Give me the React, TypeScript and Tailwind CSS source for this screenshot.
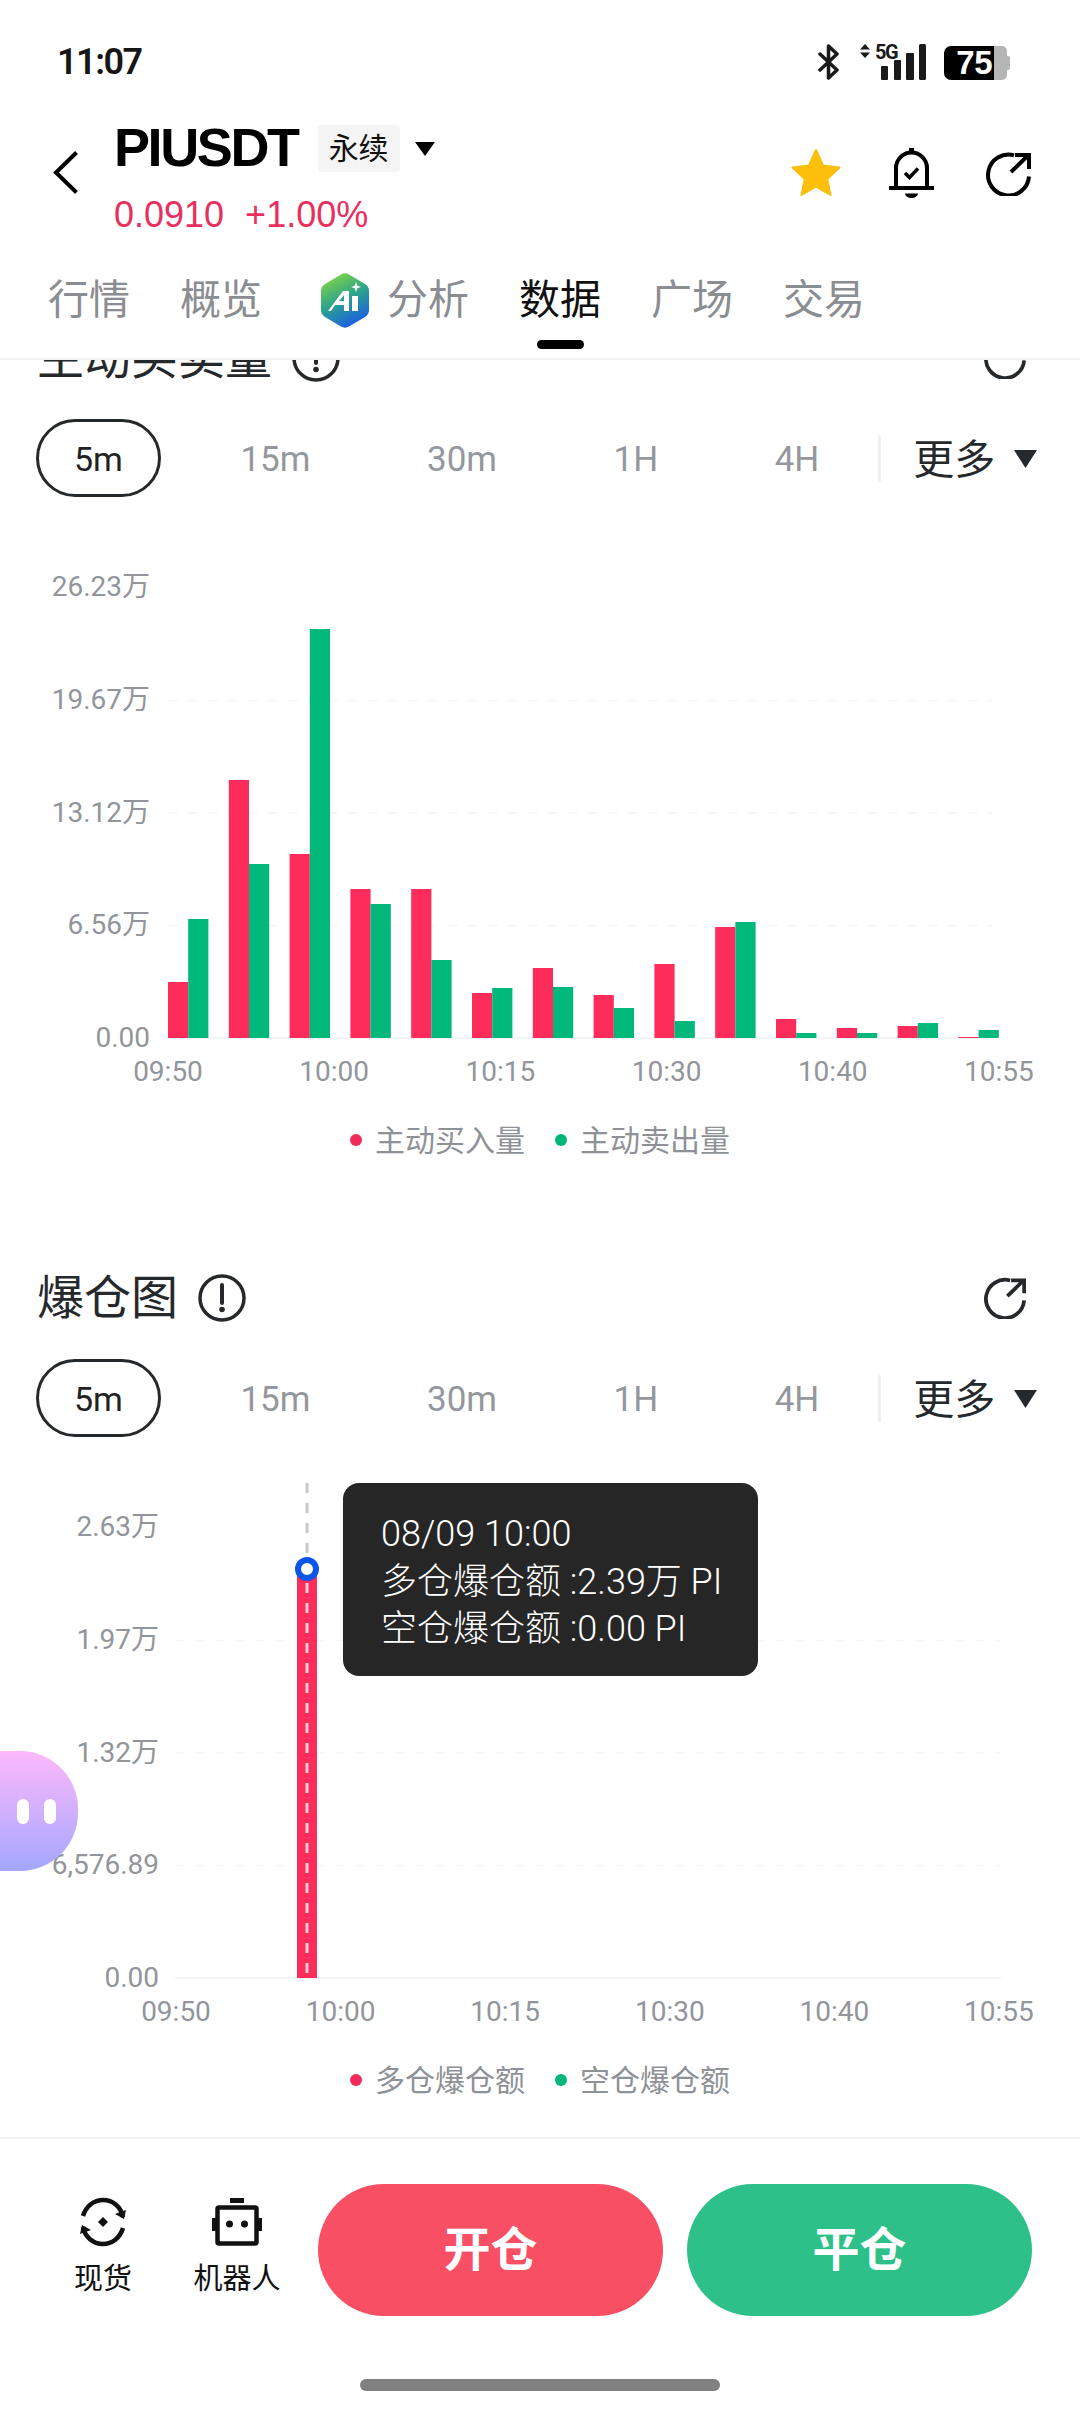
import React from 'react';

const buySell = [
  [56, 119], [258, 174], [184, 409], [149, 134], [149, 78], [45, 50], [70, 51],
  [43, 30], [74, 17], [111, 116], [19, 5], [10, 5], [12, 15], [1, 8],
];

const periods = ['5m', '15m', '30m', '1H', '4H'];

function ShareIcon({ className }: { className: string }) {
  return (
    <svg viewBox="0 0 45 44" fill="none" stroke="currentColor" strokeWidth="4" className={className}>
      <path d="M28 3.2A20.5 20.5 0 1 0 43 24.5" />
      <path d="M25 20 42 3.5M29 3h14v14" />
    </svg>
  );
}

function InfoIcon() {
  return (
    <svg viewBox="0 0 48 48" fill="none" stroke="#26292c" strokeWidth="3.5" className="w-[48px] h-[48px]">
      <circle cx="24" cy="24" r="22" />
      <path d="M24 11v18" strokeWidth="4" strokeLinecap="round" />
      <circle cx="24" cy="35.5" r="2.8" fill="#26292c" stroke="none" />
    </svg>
  );
}

function AiLogo() {
  return (
    <svg viewBox="0 0 50 55" className="w-[50px] h-[55px]">
      <defs>
        <linearGradient id="aiGrad" x1="0.2" y1="0" x2="0.65" y2="1">
          <stop offset="0" stopColor="#86d93f" />
          <stop offset="0.5" stopColor="#2ba38c" />
          <stop offset="1" stopColor="#1a5be8" />
        </linearGradient>
      </defs>
      <path
        d="M21 1.5a8 8 0 0 1 8 0l16 9.5a8 8 0 0 1 4 7v19a8 8 0 0 1-4 7l-16 9.5a8 8 0 0 1-8 0L5 44a8 8 0 0 1-4-7V18a8 8 0 0 1 4-7z"
        fill="url(#aiGrad)"
      />
      <path d="M23 18h6v20h-5v-6h-9l-4 6H8zM24 28v-6l-5 6z" fill="#fff" fillRule="evenodd" />
      <path d="M32 23h6v15h-6z" fill="#fff" />
      <path d="M36 9l1.300 3.700L41 14l-3.700 1.300L36 19l-1.300-3.700L31 14l3.700-1.300z" fill="#fff" />
    </svg>
  );
}

function StatusBar() {
  return (
    <div className="h-[100px] flex items-start justify-between pl-[57px] pr-[70px] pt-[44px]">
      <span className="text-[36px] leading-[36px] font-semibold tracking-[-1.5px] text-[#161616]">11:07</span>
      <div className="flex items-start">
        <svg viewBox="0 0 21 36" fill="none" stroke="#1a1a1a" strokeWidth="3.5" strokeLinejoin="round" strokeLinecap="round" className="w-[21px] h-[36px]">
          <path d="M2 10l17 16-8.5 8V2L19 10 2 26" />
        </svg>
        <svg viewBox="0 0 10 14" className="w-[10px] h-[14px] ml-[21px]" fill="#1a1a1a">
          <path d="M5 0l5 5.5H0zM5 14L0 8.5h10z" />
        </svg>
        <div className="relative w-[52px] h-[36px] ml-[5px]">
          <span className="absolute left-0 top-[-2px] text-[20px] leading-[20px] font-bold tracking-[-1.5px] text-[#1a1a1a]">5G</span>
          <svg viewBox="0 0 45 36" className="absolute left-[6px] top-0 w-[45px] h-[36px]" fill="#1a1a1a">
            <rect x="0" y="22" width="7" height="14" rx="1" />
            <rect x="13" y="16" width="7" height="20" rx="1" />
            <rect x="25" y="9" width="8" height="27" rx="1" />
            <rect x="38" y="0" width="7" height="36" rx="1.5" />
          </svg>
        </div>
        <div className="flex items-center ml-[17px] mt-[2px]">
          <div className="w-[50px] h-[34px] bg-black rounded-l-[7px] flex items-center justify-end pr-[2px]">
            <span className="text-[33px] leading-[34px] font-bold tracking-[-0.5px] text-white font-[family-name:'Liberation_Sans',sans-serif]">75</span>
          </div>
          <div className="w-[13px] h-[34px] bg-[#b5b5b5] rounded-r-[5px]" />
          <div className="w-[3px] h-[14px] bg-[#b5b5b5] rounded-r-[2px]" />
        </div>
      </div>
    </div>
  );
}

function Header() {
  return (
    <div className="h-[146px] flex pl-[53px] pr-[49px]">
      <svg viewBox="0 0 25 43" fill="none" stroke="#000" strokeWidth="4" className="w-[25px] h-[43px] mt-[51px]">
        <path d="M23.5 1.5 3 21.5l20.5 20" />
      </svg>
      <div className="ml-[36px] flex flex-col pt-[9px]">
        <div className="flex items-center h-[73px] pt-[2px]">
          <span className="text-[54px] leading-[60px] font-bold tracking-[-2.4px] text-black font-[family-name:'Liberation_Sans',sans-serif]">PIUSDT</span>
          <span className="ml-[20px] w-[82px] h-[47px] bg-[#f5f5f5] rounded-[4px] flex items-center justify-center text-[30px] text-[#111] mt-[4px]">永续</span>
          <svg viewBox="0 0 20 14" fill="#000" className="w-[20px] h-[14px] ml-[15px] mt-[4px]">
            <path d="M0 0h20L10 14z" />
          </svg>
        </div>
        <div className="flex items-center h-[46px] mt-[10px] gap-[21px] text-[36px] leading-[46px] text-[#e8305f] font-[family-name:'Liberation_Sans',sans-serif]">
          <span>0.0910</span>
          <span>+1.00%</span>
        </div>
      </div>
      <div className="ml-auto flex items-start pt-[47px]">
        <svg viewBox="0 0 50 49" className="w-[50px] h-[49px] mt-[1px]" fill="#fcbf0b" stroke="#fcbf0b" strokeWidth="2" strokeLinejoin="round">
          <path d="M25 2l7 15.5 16.5 2-12.2 11.4L39.500 47 25 38.600 10.500 47l3.200-16.100L1.500 19.500l16.500-2z" />
        </svg>
        <svg viewBox="0 0 45 51" fill="none" stroke="#000" strokeWidth="4" className="w-[45px] h-[51px] ml-[48px]">
          <path d="M7 41V21a15.500 15.500 0 0 1 31 0v20" />
          <path d="M0 41h45" />
          <path d="M22.500 1v4" strokeWidth="5" />
          <path d="M16 46.500h13a6.500 4.500 0 0 1-13 0z" fill="#000" stroke="none" />
          <path d="M16 26l4.500 4.500L29 21.500" strokeWidth="3.500" />
        </svg>
        <ShareIcon className="w-[45px] h-[44px] ml-[52px] mt-[5px] text-black" />
      </div>
    </div>
  );
}

function Tabs() {
  const tabClass = 'text-[41px] leading-[56px] text-[#8a8d91]';
  return (
    <div className="h-[114px] flex items-start pl-[48px] gap-[50px] border-b-2 border-[#f2f2f2] pt-[26px]">
      <span className={tabClass}>行情</span>
      <span className={tabClass}>概览</span>
      <div className="flex items-center gap-[17px] ml-[8px]">
        <AiLogo />
        <span className={tabClass}>分析</span>
      </div>
      <div className="flex flex-col items-center">
        <span className="text-[41px] leading-[56px] text-[#111]">数据</span>
        <div className="w-[47px] h-[9px] rounded-full bg-black mt-[12px]" />
      </div>
      <span className={tabClass}>广场</span>
      <span className={tabClass}>交易</span>
    </div>
  );
}

function PeriodRow() {
  return (
    <div className="flex items-center pl-[36px] h-[78px]">
      <div className="flex items-center gap-[42.5px]">
        {periods.map((p, i) => (
          <span
            key={p}
            className={
              i === 0
                ? 'h-[78px] px-[35px] pt-[2px] flex items-center rounded-[39px] border-[3px] border-[#26292c] text-[34px] text-[#222]'
                : 'px-[37px] pt-[5px] text-[35px] text-[#94979c]'
            }
          >
            {p}
          </span>
        ))}
      </div>
      <div className="w-[3px] h-[47px] bg-[#eef0f2] ml-[22px]" />
      <span className="ml-[32px] pt-[3px] text-[41px] leading-[56px] text-[#26292c]">更多</span>
      <svg viewBox="0 0 23 18" fill="#26292c" className="w-[23px] h-[18px] ml-[19px] mt-[2px]">
        <path d="M0 0h23L11.500 18z" />
      </svg>
    </div>
  );
}

function Legend({ buy, sell }: { buy: string; sell: string }) {
  return (
    <div className="mt-[38px] h-[30px] flex items-center justify-center gap-[30px] text-[30px] text-[#8e9196]">
      <div className="flex items-center gap-[13px]">
        <span className="w-[12px] h-[12px] rounded-full bg-[#f12c58]" />
        {buy}
      </div>
      <div className="flex items-center gap-[13px]">
        <span className="w-[12px] h-[12px] rounded-full bg-[#00b67a]" />
        {sell}
      </div>
    </div>
  );
}

function Section({
  title,
  sectionClass,
  axisClass,
  xRowClass,
  yLabels,
  xLabels,
  legend,
  children,
  overlay,
}: {
  title: string;
  sectionClass: string;
  axisClass: string;
  xRowClass: string;
  yLabels: string[];
  xLabels: string[];
  legend: [string, string];
  children: React.ReactNode;
  overlay?: React.ReactNode;
}) {
  return (
    <section className={sectionClass}>
      <div className="h-[60px] flex items-center justify-between pl-[37px] pr-[54px]">
        <div className="flex items-center gap-[20px]">
          <h2 className="text-[47px] leading-[60px] font-normal text-[#26292c]">{title}</h2>
          <InfoIcon />
        </div>
        <ShareIcon className="w-[42px] h-[42px] text-[#26292c]" />
      </div>
      <div className="mt-[31px]">
        <PeriodRow />
      </div>
      <div className="relative mt-[46px] flex h-[496px]">
        <div className={axisClass}>
          {yLabels.map((label) => (
            <span key={label} className="h-0 flex items-center text-[28px] text-[#92959a]">
              {label}
            </span>
          ))}
        </div>
        <svg viewBox="0 0 920 496" className="w-[920px] h-[496px]">
          {children}
        </svg>
        {overlay}
      </div>
      <div className={xRowClass}>
        {xLabels.map((label) => (
          <span key={label} className="w-[70px] flex justify-center whitespace-nowrap text-[28px] leading-[30px] text-[#92959a]">
            {label}
          </span>
        ))}
      </div>
      <Legend buy={legend[0]} sell={legend[1]} />
    </section>
  );
}

function GridLines({ from, to }: { from: number; to: number }) {
  return (
    <g>
      {[157.4, 270, 382.6].map((y) => (
        <line key={y} x1={from} x2={to} y1={y} y2={y} stroke="#f6f6f7" strokeWidth="1.500" strokeDasharray="10 10" />
      ))}
      <line x1={from} x2={to} y1={495} y2={495} stroke="#f3f4f5" strokeWidth="2" />
    </g>
  );
}

export default function App() {
  return (
    <div className="relative w-[1080px] h-[2412px] overflow-hidden bg-white flex flex-col font-[family-name:Roboto,'Noto_Sans_CJK_SC',sans-serif]">
      <StatusBar />
      <Header />
      <Tabs />
      <main className="h-[1777px] overflow-hidden">
        <Section
          title="主动买卖量"
          sectionClass="-mt-[32px]"
          axisClass="w-[160px] pr-[10px] pt-[44px] h-[495px] flex flex-col items-end justify-between"
          xRowClass="mt-[18px] pl-[133px] pr-[46px] flex justify-between"
          yLabels={['26.23万', '19.67万', '13.12万', '6.56万', '0.00']}
          xLabels={['09:50', '10:00', '10:15', '10:30', '10:40', '10:55']}
          legend={['主动买入量', '主动卖出量']}
        >
          <GridLines from={8} to={832} />
          {buySell.map(([buy, sell], i) => (
            <g key={i}>
              <rect x={8 + i * 60.8} y={495 - buy} width={20.2} height={buy} fill="#fe2c5a" />
              <rect x={28.2 + i * 60.8} y={495 - sell} width={20.2} height={sell} fill="#00b87a" />
            </g>
          ))}
        </Section>
        <Section
          title="爆仓图"
          sectionClass="mt-[113px]"
          axisClass="w-[160px] pr-[1px] pt-[44px] h-[495px] flex flex-col items-end justify-between"
          xRowClass="mt-[18px] pl-[141px] pr-[46px] flex justify-between"
          yLabels={['2.63万', '1.97万', '1.32万', '6,576.89', '0.00']}
          xLabels={['09:50', '10:00', '10:15', '10:30', '10:40', '10:55']}
          legend={['多仓爆仓额', '空仓爆仓额']}
          overlay={
            <div className="absolute left-[343px] top-0 w-[415px] h-[193px] rounded-[16px] bg-[#262626] pl-[38px] pt-[28px] text-[36px] leading-[47.500px] font-light text-white">
              <div>08/09 10:00</div>
              <div>多仓爆仓额 :2.39万 PI</div>
              <div>空仓爆仓额 :0.00 PI</div>
            </div>
          }
        >
          <GridLines from={15} to={841} />
          <rect x={137} y={87} width={20} height={408} fill="#fe2c5a" />
          <line x1={147} x2={147} y1={0} y2={80} stroke="#c6c8cb" strokeWidth="3" strokeDasharray="10 10" />
          <line x1={147} x2={147} y1={100} y2={492} stroke="#ffc9d6" strokeWidth="3" strokeDasharray="10 10" />
          <circle cx={147} cy={86} r={9} fill="#fff" stroke="#0a56e8" strokeWidth="6" />
        </Section>
      </main>
      <footer className="flex-1 border-t-2 border-[#f2f2f2] bg-white">
        <div className="flex items-start pl-[58px] pt-[45px]">
          <div className="w-[90px] flex flex-col items-center pt-[13px]">
            <svg viewBox="0 0 50 50" fill="none" stroke="#111" strokeWidth="4.500" className="w-[50px] h-[50px]">
              <path d="M5 19C8 9 16 3 25 3c10 0 18 7 20 17" />
              <path d="M45 31c-3 10-11 16-20 16C15 47 7 40 5 30" />
              <path d="M37 17l9 5 2-9zM13 33l-9-5-2 9z" fill="#111" stroke="none" />
              <path d="M25 20l5 5-5 5-5-5z" fill="#111" stroke="none" />
            </svg>
            <span className="mt-[12px] text-[29px] leading-[40px] text-[#111]">现货</span>
          </div>
          <div className="w-[90px] ml-[44px] flex flex-col items-center pt-[13px]">
            <svg viewBox="0 0 50 50" fill="none" className="w-[50px] h-[50px]">
              <rect x="18" y="1" width="14" height="5" fill="#111" />
              <rect x="5.500" y="10.500" width="39" height="36" rx="1.500" stroke="#111" strokeWidth="4.500" />
              <rect x="0" y="21" width="4" height="13" fill="#111" />
              <rect x="46" y="21" width="4" height="13" fill="#111" />
              <circle cx="17.500" cy="27" r="3.500" fill="#111" />
              <circle cx="32.500" cy="27" r="3.500" fill="#111" />
            </svg>
            <span className="mt-[12px] text-[29px] leading-[40px] whitespace-nowrap text-[#111]">机器人</span>
          </div>
          <button className="ml-[36px] w-[345px] h-[132px] rounded-[66px] bg-[#f84f65] text-[47px] font-bold text-white">开仓</button>
          <button className="ml-[24px] w-[345px] h-[132px] rounded-[66px] bg-[#2dc189] text-[47px] font-bold text-white">平仓</button>
        </div>
        <div className="mt-[63px] mx-auto w-[360px] h-[12px] rounded-full bg-[#808080]" />
      </footer>
      <div className="absolute left-0 top-[1751px] w-[78px] h-[120px] rounded-r-[58px] bg-gradient-to-b from-[#fdb8fb] to-[#a3a6ff] flex items-center gap-[15px] pl-[17px]">
        <span className="w-[12px] h-[25px] rounded-full bg-white" />
        <span className="w-[12px] h-[25px] rounded-full bg-white" />
      </div>
    </div>
  );
}
